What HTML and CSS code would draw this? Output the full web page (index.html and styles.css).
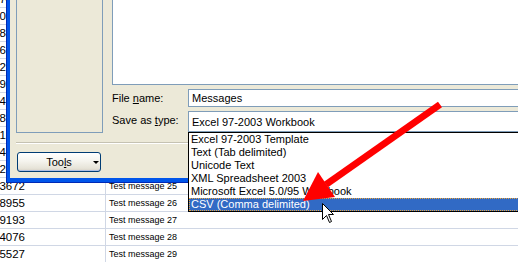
FILE: index.html
```html
<!DOCTYPE html>
<html lang="en">
<head>
    <meta charset="UTF-8">
    <meta name="viewport" content="width=device-width, initial-scale=1.0">
    <title>Save As</title>
    <link rel="stylesheet" href="styles.css">
</head>
<body>
    <div class="sheet">
        <div class="sheet-row"><div class="cell-a"><span class="num">37421</span></div><div class="cell-b">Test message 14</div></div>
        <div class="sheet-row"><div class="cell-a"><span class="num">50318</span></div><div class="cell-b">Test message 15</div></div>
        <div class="sheet-row"><div class="cell-a"><span class="num">28405</span></div><div class="cell-b">Test message 16</div></div>
        <div class="sheet-row"><div class="cell-a"><span class="num">46213</span></div><div class="cell-b">Test message 17</div></div>
        <div class="sheet-row"><div class="cell-a"><span class="num">72941</span></div><div class="cell-b">Test message 18</div></div>
        <div class="sheet-row"><div class="cell-a"><span class="num">19587</span></div><div class="cell-b">Test message 19</div></div>
        <div class="sheet-row"><div class="cell-a"><span class="num">84102</span></div><div class="cell-b">Test message 20</div></div>
        <div class="sheet-row"><div class="cell-a"><span class="num">38760</span></div><div class="cell-b">Test message 21</div></div>
        <div class="sheet-row"><div class="cell-a"><span class="num">61394</span></div><div class="cell-b">Test message 22</div></div>
        <div class="sheet-row"><div class="cell-a"><span class="num">24487</span></div><div class="cell-b">Test message 23</div></div>
        <div class="sheet-row"><div class="cell-a"><span class="num">52079</span></div><div class="cell-b">Test message 24</div></div>
        <div class="sheet-row"><div class="cell-a"><span class="num">83672</span></div><div class="cell-b">Test message 25</div></div>
        <div class="sheet-row"><div class="cell-a"><span class="num">18955</span></div><div class="cell-b">Test message 26</div></div>
        <div class="sheet-row"><div class="cell-a"><span class="num">49193</span></div><div class="cell-b">Test message 27</div></div>
        <div class="sheet-row"><div class="cell-a"><span class="num">74076</span></div><div class="cell-b">Test message 28</div></div>
        <div class="sheet-row"><div class="cell-a"><span class="num">15527</span></div><div class="cell-b">Test message 29</div></div>
    </div>

    <div class="dialog">
        <div class="top">
            <div class="places"></div>
            <div class="main">
                <div class="files"></div>
                <div class="field">
                    <label class="field-label">File <u>n</u>ame:</label>
                    <div class="box">Messages</div>
                </div>
                <div class="field">
                    <label class="field-label">Save as <u>t</u>ype:</label>
                    <div class="box combo">Excel 97-2003 Workbook
                        <ul class="list">
                            <li>Excel 97-2003 Template</li>
                            <li>Text (Tab delimited)</li>
                            <li>Unicode Text</li>
                            <li>XML Spreadsheet 2003</li>
                            <li>Microsoft Excel 5.0/95 Workbook</li>
                            <li class="selected">CSV (Comma delimited)</li>
                        </ul>
                    </div>
                </div>
            </div>
        </div>
        <div class="sep"></div>
        <div class="footer">
            <button class="tools"><span></span><span>Too<u>l</u>s</span><span class="caret"></span></button>
        </div>
    </div>

    <svg class="overlay" width="518" height="262" viewBox="0 0 518 262">
        <line x1="440" y1="104.5" x2="326" y2="184.5" stroke="#ff0000" stroke-width="7"/>
        <polygon points="303,201 318,172 335,197" fill="#ff0000"/>
        <path d="M0 0 V16 L4 12 L7 19 L9 18 L6 11 H11 Z" transform="translate(322.5 203.5)" fill="#fff" stroke="#000" stroke-width="1" stroke-linejoin="miter"/>
    </svg>
</body>
</html>
```

FILE: styles.css
```css
body {
    margin: 0;
    width: 518px;
    height: 262px;
    overflow: hidden;
    position: relative;
    background: #fff;
    font-family: "Liberation Sans", Arial, sans-serif;
    color: #000;
}

/* spreadsheet behind the dialog */
.sheet {
    margin-top: -9px;
}

.sheet-row {
    display: flex;
    height: 16px;
    border-bottom: 1px solid #d0d7e5;
}

.cell-a {
    width: 105px;
    border-right: 1px solid #d0d7e5;
    font-size: 11.5px;
    line-height: 16px;
}

.num {
    display: block;
    width: 40px;
    margin-left: -15px;
    text-align: right;
}

.cell-b {
    padding-left: 3px;
    font-size: 9px;
    line-height: 17px;
    white-space: nowrap;
}

/* save as dialog */
.dialog {
    position: absolute;
    left: 7px;
    top: -10px;
    width: 540px;
    height: 188px;
    display: flex;
    flex-direction: column;
    background: #ece9d8;
    border-left: 3px solid #0055ea;
    border-bottom: 4px solid #0055ea;
    box-shadow: -1px 1px 0 #0029b5;
    font-size: 11px;
}

.top {
    display: flex;
    height: 143px;
}

.places {
    margin-left: 6px;
    width: 85px;
    border: 1px solid #7f9db9;
}

.main {
    flex: 1;
    margin-left: 9px;
    display: flex;
    flex-direction: column;
}

.files {
    height: 93px;
    border: 1px solid #7f9db9;
    background: #fff;
}

.field {
    display: flex;
    align-items: flex-start;
    margin-top: 4px;
}

.field-label {
    width: 76px;
    line-height: 18px;
}

.box {
    flex: 1;
    height: 16px;
    padding-left: 3px;
    border: 1px solid #7f9db9;
    background: #fff;
    line-height: 16px;
    white-space: nowrap;
}

.combo {
    position: relative;
    height: 19px;
    line-height: 20px;
}

.list {
    position: absolute;
    left: -1px;
    top: 20px;
    width: 340px;
    height: 78px;
    margin: 0;
    padding: 0;
    list-style: none;
    border: 1px solid #000;
    background: #fff;
    line-height: 13px;
}

.list li {
    height: 13px;
    padding-left: 2px;
    white-space: nowrap;
}

.list .selected {
    background: #316ac5;
    color: #fff;
    outline: 1px dotted #e8a43c;
    outline-offset: -1px;
}

.sep {
    margin: 9px 0 0 6px;
    border-top: 1px solid #c5c2b2;
    border-bottom: 1px solid #fff;
}

.footer {
    padding: 8px 0 0 7px;
}

.tools {
    width: 84px;
    height: 20px;
    padding: 0 1px;
    display: grid;
    grid-template-columns: 1fr auto 1fr;
    align-items: center;
    border: 1px solid #003c74;
    border-radius: 3px;
    background: linear-gradient(#ffffff, #f5f4ee 45%, #e6e3d8 85%, #d6d0c5);
    box-shadow: inset 0 -1px 0 #aebfe6;
    font-family: "Liberation Sans", Arial, sans-serif;
    font-size: 11px;
    color: #000;
}

.caret {
    justify-self: end;
    width: 0;
    height: 0;
    border-left: 3px solid transparent;
    border-right: 3px solid transparent;
    border-top: 3px solid #000;
}

.overlay {
    position: absolute;
    left: 0;
    top: 0;
    pointer-events: none;
}
```
